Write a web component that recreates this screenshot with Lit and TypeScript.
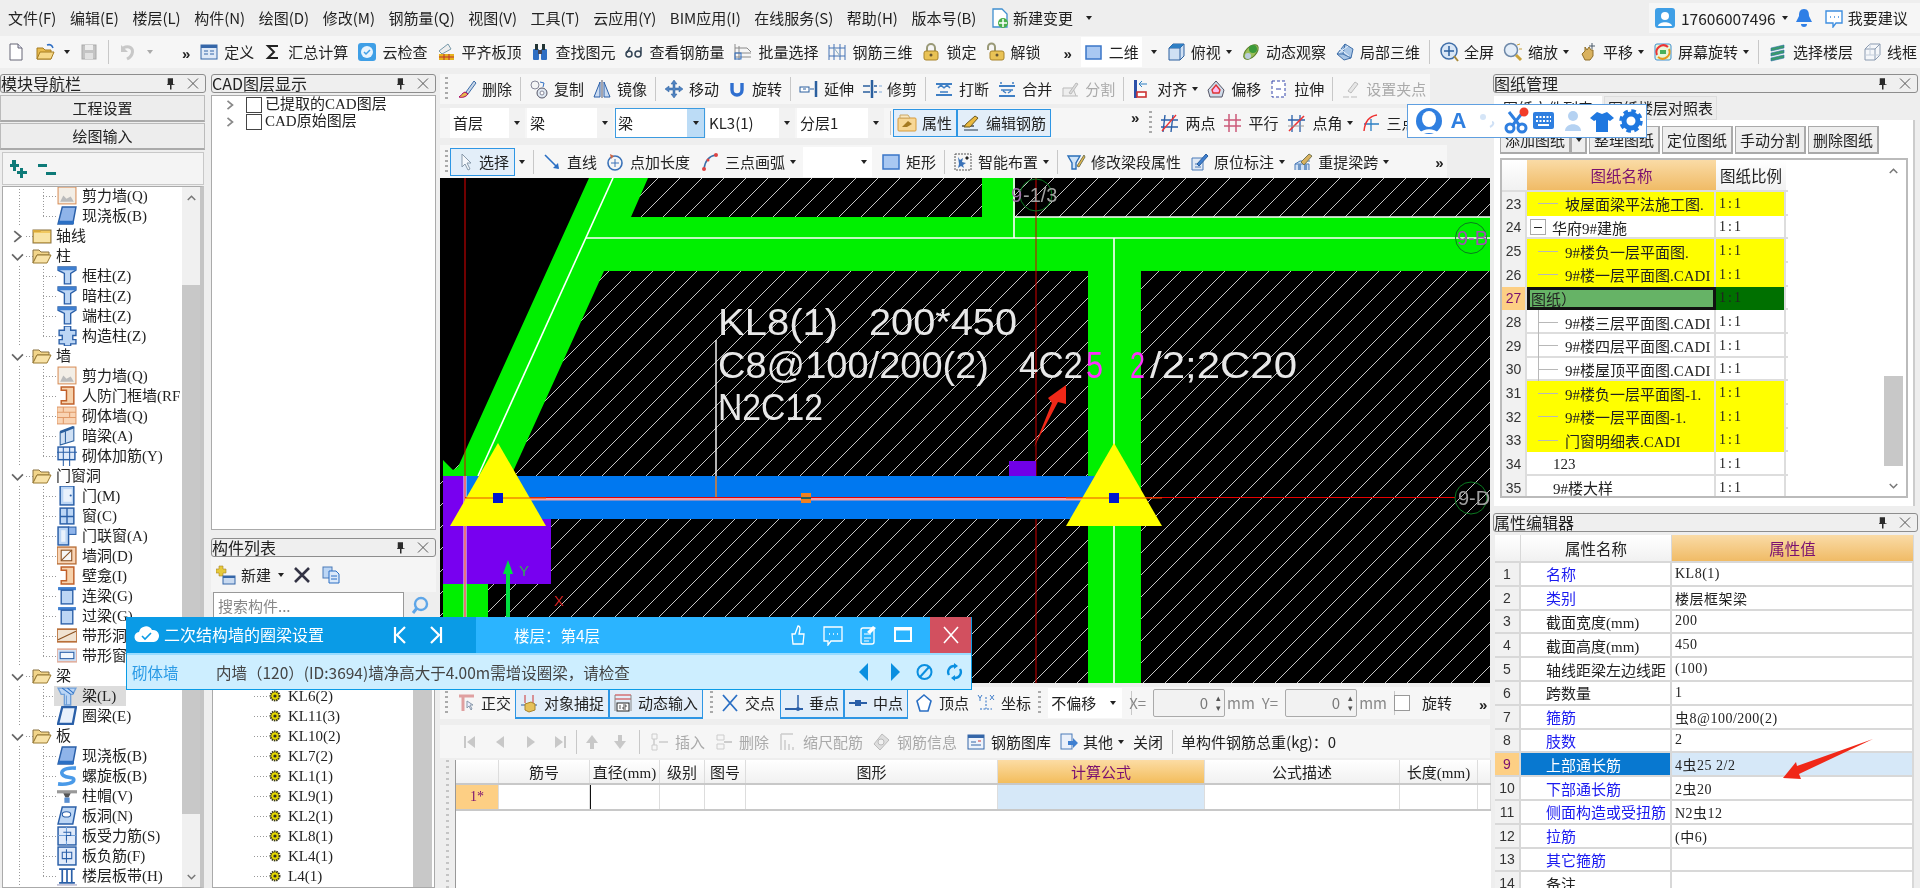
import { LitElement, html, css, svg } from "lit";
import { customElement } from "lit/decorators.js";

const B = "#2f6fc4";
const ICONS: Record<string, any> = {
  new: svg`<path d="M4 2h8l4 4v12H4z" fill="#fff" stroke="#667"/><path d="M12 2v4h4" fill="#dde" stroke="#667"/>`,
  open: svg`<path d="M2 17V6h6l2 2h6v9z" fill="#e8bb4e" stroke="#a67c20"/><path d="M2 17l3-7h14l-3 7z" fill="#f6d98a" stroke="#a67c20"/><path d="M12 3c3-1 5 0 6 3" fill="none" stroke="${B}" stroke-width="1.5"/>`,
  save: svg`<rect x="3" y="3" width="14" height="14" fill="#c4c4c4" stroke="#aaa"/><rect x="6" y="3" width="8" height="5" fill="#eee"/><rect x="6" y="11" width="8" height="6" fill="#e2e2e2"/>`,
  undo: svg`<path d="M5 6c6-3 11 0 9 6-1 3-3 4-5 5" fill="none" stroke="#c8c8c8" stroke-width="3"/><path d="M3 3v7h7z" fill="#c8c8c8"/>`,
  def: svg`<rect x="2" y="3" width="16" height="14" fill="#dfe9f7" stroke="#3566a8"/><rect x="2" y="3" width="16" height="3" fill="#3566a8"/><path d="M5 9h4M5 12h4M11 9h4M11 12h4" stroke="#3566a8"/>`,
  sigma: svg`<path d="M15 4H5l6 6-6 6h10" fill="none" stroke="#222" stroke-width="2"/>`,
  cloud: svg`<rect x="1" y="1" width="18" height="18" rx="3" fill="#3f9fe6"/><circle cx="10" cy="10" r="6" fill="#e8f4fd"/><path d="M7 10l2 2 4-4" fill="none" stroke="#3f9fe6" stroke-width="1.5"/>`,
  align: svg`<path d="M3 9l9-7 3 5-9 5z" fill="#eee" stroke="#79a"/><rect x="3" y="12" width="15" height="6" fill="#e6b21c"/><path d="M3 15h15M8 12v6M13 12v6" stroke="#b33"/>`,
  binoc: svg`<rect x="3" y="7" width="6" height="11" rx="1" fill="${B}"/><rect x="11" y="7" width="6" height="11" rx="1" fill="${B}"/><rect x="5" y="2" width="3" height="6" fill="#233"/><rect x="12" y="2" width="3" height="6" fill="#233"/><rect x="8" y="8" width="4" height="4" fill="#445"/>`,
  glasses: svg`<circle cx="5" cy="12" r="3" fill="none" stroke="#345" stroke-width="1.5"/><path d="M3 11l3-6" stroke="#345" stroke-width="1.5"/><path d="M14 9a3 3 0 100 6 3 3 0 000-6zM17 12V5" fill="none" stroke="#345" stroke-width="1.5"/>`,
  batch: svg`<path d="M2 2v16M6 4v14M2 6h12l4 4M2 11h16M2 15h16" stroke="#8a8a8a" fill="none"/><rect x="2" y="11" width="6" height="6" fill="none" stroke="${B}"/>`,
  r3d: svg`<path d="M2 3v15M7 2v16M13 2v16M18 3v15M2 6h16M2 14h16" stroke="#4472b4" fill="none"/><path d="M7 6l6 8" stroke="#8ab"/>`,
  lock: svg`<path d="M6 9V6a4 4 0 018 0v3" fill="none" stroke="#997" stroke-width="2"/><rect x="3" y="9" width="14" height="9" rx="2" fill="#e9c255" stroke="#a8832a"/><circle cx="10" cy="13" r="1.5" fill="#653"/>`,
  unlock: svg`<path d="M3 8V5a3.5 3.5 0 017 0v4" fill="none" stroke="#997" stroke-width="2"/><rect x="5" y="9" width="14" height="9" rx="2" fill="#e9c255" stroke="#a8832a"/><circle cx="12" cy="13" r="1.5" fill="#653"/>`,
  d2: svg`<rect x="2" y="4" width="15" height="13" fill="#a9c8f2" stroke="#3a76c8" stroke-width="1.5"/>`,
  top: svg`<path d="M3 6l4-4h11v12l-4 4H3z" fill="#cfe0f4" stroke="#2a5f9e"/><path d="M3 6h11v12M14 6l4-4" fill="none" stroke="#2a5f9e"/><path d="M3 6l4-4h11l-4 4z" fill="#2f7fc4"/>`,
  orbit: svg`<ellipse cx="10" cy="10" rx="9" ry="5" transform="rotate(-45 10 10)" fill="#9bbf5a" stroke="#5a7f2a"/><circle cx="12" cy="7" r="4" fill="#3a9a3a"/><circle cx="7" cy="14" r="3" fill="#bcd"/>`,
  local: svg`<path d="M10 2l8 5-2 9-7 2-7-6z" fill="#a7c5e6" stroke="#3f6ea8"/><path d="M10 2l-2 10 8 4M8 12l-6 0" stroke="#3f6ea8" fill="none"/><path d="M5 7l9 7M13 4l-9 7" stroke="#e9f2fb"/>`,
  full: svg`<circle cx="10" cy="9" r="8" fill="#d8e6f6" stroke="#3f6ea8" stroke-width="1.5"/><path d="M10 4v10M5 9h10" stroke="#2a5f9e" stroke-width="1.5"/><path d="M15 14l4 5" stroke="#a98a3a" stroke-width="2"/>`,
  zoom: svg`<circle cx="8" cy="8" r="6.5" fill="#e4eef9" stroke="#6d88a8" stroke-width="1.5"/><path d="M13 13l5 5" stroke="#c9a23a" stroke-width="3"/><path d="M14 3l3-1M16 7h3" stroke="#c9a23a"/>`,
  pan: svg`<path d="M4 12l3-3V5l2 3 2-3 2 3 2 0v6l-3 4H7z" fill="#d9b25f" stroke="#8f6f2a"/><path d="M14 1v6M11 4h6" stroke="#4a5a6a"/>`,
  srot: svg`<rect x="2" y="2" width="16" height="16" rx="2" fill="#eaf6d8" stroke="#3f8fd0"/><path d="M4 13a7 7 0 0111-8" fill="none" stroke="#e33" stroke-width="2"/><path d="M16 7a7 7 0 01-11 8" fill="none" stroke="#e89a1a" stroke-width="2"/><rect x="7" y="8" width="6" height="4" fill="#4ab05a"/>`,
  floor: svg`<path d="M3 6l13-3v3L3 9zM3 11l13-3v3L3 14zM3 16l13-3v3l-13 3z" fill="#3a9a6a" stroke="#2a6fa8" stroke-width=".6"/>`,
  wire: svg`<path d="M3 7l5-5h10v11l-5 5H3zM3 7h10v11M13 7l5-5" fill="#f5f7fa" stroke="#8a9ab0"/><path d="M8 2v11H3M8 13l10 0" stroke="#c4cedb" fill="none"/>`,
  brush: svg`<path d="M9 13l8-11 2 2-8 11z" fill="#c7d6e8" stroke="#3f6ea8"/><path d="M2 18c2-1 3-4 6-5l3 2c-2 3-6 4-9 3z" fill="#e4b74a" stroke="#a06"/>`,
  copy: svg`<circle cx="6" cy="6" r="4" fill="#f5f5f5" stroke="#889"/><circle cx="13" cy="14" r="5" fill="#dfe8f2" stroke="#556"/><circle cx="13" cy="14" r="2" fill="#fff" stroke="#889"/><path d="M11 3l4 1-1 4" fill="none" stroke="${B}"/>`,
  mirror: svg`<path d="M8 3v15H2zM12 3v15h6z" fill="#cbdcf2" stroke="#2a5fa8"/><path d="M10 1v18" stroke="#556"/>`,
  move: svg`<path d="M10 1l3 4h-2v4h4V7l4 3-4 3v-2h-4v4h2l-3 4-3-4h2v-4H5v2l-4-3 4-3v2h4V5H7z" fill="#4f82c0" stroke="#2a5f9e" stroke-width=".5"/>`,
  rot: svg`<path d="M5 4v7a5 5 0 0010 0V4" fill="none" stroke="#2f6fd0" stroke-width="3.4"/>`,
  extend: svg`<rect x="1" y="8" width="9" height="5" fill="#fff" stroke="#2a5f9e"/><path d="M11 10h4M4 10h3" stroke="#2a5f9e"/><path d="M17 2v16" stroke="#2a5f9e" stroke-width="2.5"/>`,
  trim: svg`<path d="M1 7h7M1 13h7M12 7h3M12 13h3" stroke="#2a5f9e" stroke-width="1.6"/><path d="M10 1v18" stroke="#2a5f9e" stroke-width="2.5"/><path d="M17 7h3M17 13h3" stroke="#a8c4e4" stroke-width="1.6"/>`,
  brk: svg`<path d="M2 5h16M2 16h16" stroke="#3f7fc4" stroke-width="2"/><path d="M4 9l3-3 3 3M16 9l-3-3-3 3M6 13h8" stroke="#3f7fc4" fill="none" stroke-width="1.5"/>`,
  merge: svg`<path d="M2 7h16M2 17h16" stroke="#3f7fc4" stroke-width="2"/><path d="M4 3v2M16 3v2M6 12l3 2M14 12l-3 2M4 11h12" stroke="#3f7fc4" fill="none" stroke-width="1.5"/>`,
  split: svg`<path d="M2 17h16M3 17V9h10l3 8" fill="#eee" stroke="#bbb"/><path d="M9 14l7-10 2 1-7 10z" fill="#ddd" stroke="#bbb"/>`,
  alignr: svg`<rect x="2" y="1" width="3" height="18" fill="#2a4fa8"/><rect x="5" y="13" width="9" height="5" fill="#fff" stroke="#c33" stroke-width="1.6"/><path d="M7 5h8M10 2L7 5l3 3" stroke="#2a7fc4" fill="none"/>`,
  offset: svg`<path d="M10 2l8 9-2 7H4l-2-7z" fill="#d0dcea" stroke="#556"/><path d="M10 6l4 5-1 3H7l-1-3z" fill="#fbe" stroke="#d33" stroke-width="1.4"/>`,
  stretch: svg`<rect x="3" y="2" width="13" height="16" fill="#fff" stroke="#34a" stroke-dasharray="3 2"/><path d="M7 10h5" stroke="#34a"/>`,
  grip: svg`<path d="M2 18h6M10 18h6M7 12l7-9 3 2-7 9z" stroke="#bbb" fill="#e6e6e6"/>`,
  prop: svg`<rect x="1" y="5" width="18" height="13" rx="1" fill="#f7d796" stroke="#d79a3a"/><path d="M3 2h8l2 3H3z" fill="#fbe7bd" stroke="#c9a868"/><path d="M5 14l6-6 4 3-5 3z" fill="#a57a22"/>`,
  edit: svg`<path d="M1 13h12" stroke="#222" stroke-width="1.2"/><path d="M3 14l2-3 9-8 3 2-8 9z" fill="#eab93f" stroke="#6b5a23"/><path d="M3 17h14" stroke="#456" stroke-width="1.2"/>`,
  twop: svg`<path d="M5 2l-2 17M13 2l-2 17M1 7h17M1 14h17" stroke="#2a5fa8" stroke-width="1.4"/><path d="M2 18L16 2" stroke="#e33" stroke-width="1.4"/>`,
  par: svg`<path d="M6 1v18M13 1v18M1 7h17M1 13h17" stroke="#cc5a7a" stroke-width="1.5"/>`,
  ang: svg`<path d="M5 2v17M13 2v17M1 7h17" stroke="#2a5fa8" stroke-width="1.3"/><path d="M2 18L17 3" stroke="#e33" stroke-width="1.6"/><path d="M1 13h16" stroke="#999"/>`,
  three: svg`<path d="M10 18V6M3 11h15" stroke="#2a7fc4" stroke-width="1.3"/><path d="M3 18C4 8 9 3 16 2" stroke="#e33" fill="none" stroke-width="1.5"/>`,
  cursor: svg`<path d="M6 2v13l3-3 3 6 2-1-3-6h4z" fill="#f5f8fc" stroke="#89a"/>`,
  line: svg`<path d="M3 3l13 13" stroke="#2a6fc4" stroke-width="1.6"/><path d="M17 17l-6-1 5-5z" fill="#2a6fc4"/>`,
  plen: svg`<circle cx="10" cy="11" r="7" fill="none" stroke="#3a72b8" stroke-width="1.6"/><path d="M10 7v8M6 11h8" stroke="#3a72b8"/><path d="M5 2l4 2-3 3z" fill="#c64"/>`,
  arc: svg`<path d="M4 17C5 9 9 4 16 3" fill="none" stroke="#3a6fa8" stroke-width="1.6"/><circle cx="4" cy="17" r="2" fill="#d44"/><circle cx="8" cy="8" r="1.5" fill="#d44"/><circle cx="16" cy="3" r="2" fill="#d44"/>`,
  rect: svg`<rect x="2" y="3" width="16" height="14" fill="#a9c8f2" stroke="#3a76c8" stroke-width="1.5"/>`,
  smart: svg`<rect x="2" y="2" width="16" height="16" fill="none" stroke="#555" stroke-dasharray="2 1"/><path d="M5 5l2 3 3-2-1 4 4 1-3 2 1 3-3-2-3 2 1-4z" fill="#3a72b8"/><path d="M14 4l2 2-2 2-2-2z" fill="#222"/>`,
  modb: svg`<path d="M2 4h12l-4 7v6H6v-6z" fill="#cfe4f8" stroke="#2a6fb8" stroke-width="1.4"/><path d="M11 14l7-11 1 2-6 10z" fill="#e6b84a" stroke="#775"/>`,
  orig: svg`<path d="M3 6h11v12H3z" fill="#dfe8f4" stroke="#4a7ab8"/><path d="M6 12h6M6 15h6" stroke="#4a7ab8"/><path d="M8 12l9-10 2 2-9 10z" fill="#3f7fd0" stroke="#2a5f9e"/>`,
  reex: svg`<path d="M2 18v-6h14v6M2 12l5-3h10" fill="#cfe0f4" stroke="#4a7ab8"/><path d="M5 12h3v6H5zM11 12h3v6h-3z" fill="#6f98c8"/><path d="M8 10l8-8 3 2-8 9z" fill="#d9b25f" stroke="#775"/>`,
  ortho: svg`<path d="M3 3h15" stroke="#e0a0a0" stroke-width="3"/><path d="M7 3v15" stroke="#e0a0a0" stroke-width="3"/><path d="M11 8v7l2-2 2 4 1-1-2-4h3z" fill="#eef" stroke="#89a"/>`,
  snap: svg`<path d="M2 12h16" stroke="#2a5fa8"/><path d="M6 2v8M14 2v8" stroke="#c33"/><path d="M6 11l6-2 4 2v6l-6 2-4-2z" fill="#e6c15a" stroke="#a8832a"/>`,
  dyn: svg`<path d="M2 2h16M2 6h16" stroke="#c33"/><path d="M2 2v16M18 2v16" stroke="#888"/><rect x="4" y="10" width="12" height="8" fill="#fff" stroke="#222"/><path d="M7 12v4M10 12h3v2h-3v2h3" stroke="#222" fill="none" stroke-width=".8"/>`,
  cross: svg`<path d="M3 2l14 16M17 2L3 18" stroke="#2a6fc4" stroke-width="1.8"/>`,
  perp: svg`<path d="M1 16h18" stroke="#2a5fa8" stroke-width="2"/><path d="M14 2v14" stroke="#2a5fa8" stroke-width="1.5"/><circle cx="14" cy="16" r="2" fill="#2a5fa8"/>`,
  mid: svg`<path d="M1 10h18" stroke="#2a5fa8" stroke-width="2"/><rect x="7" y="7" width="6" height="6" fill="#2a5fa8"/>`,
  vertex: svg`<path d="M10 2l7 6-3 10H6L3 8z" fill="#fff" stroke="#2a6fc4" stroke-width="1.6"/>`,
  coord: svg`<path d="M10 4v12M4 16h12" stroke="#2a6fc4" stroke-dasharray="2 1.5"/><path d="M2 2l2 3 2-3M4 5v3M14 2l4 5M18 2l-4 5" stroke="#2a6fc4" fill="none" stroke-width=".9"/>`,
  first: svg`<path d="M5 4h2v12H5zM16 4v12L8 10z" fill="#c8c8c8"/>`,
  prev: svg`<path d="M14 4v12L6 10z" fill="#c8c8c8"/>`,
  next: svg`<path d="M6 4v12l8-6z" fill="#c8c8c8"/>`,
  last: svg`<path d="M13 4h2v12h-2zM4 4v12l8-6z" fill="#c8c8c8"/>`,
  up: svg`<path d="M10 3l6 8h-4v6H8v-6H4z" fill="#c8c8c8"/>`,
  down: svg`<path d="M10 17l6-8h-4V3H8v6H4z" fill="#c8c8c8"/>`,
  ins: svg`<path d="M2 2h5v5H2zM2 13h5v5H2z" fill="none" stroke="#ccc"/><path d="M4 7v6M9 10h9" stroke="#ccc" stroke-width="1.5"/>`,
  del2: svg`<path d="M3 3h7v5H3zM3 12h7v5H3z" fill="none" stroke="#ccc"/><path d="M10 10h8" stroke="#ccc" stroke-width="2"/>`,
  scale: svg`<path d="M3 2v16M7 8v10M11 12v6M15 15v3M3 2h12" stroke="#ccc" stroke-width="1.5" fill="none"/>`,
  info: svg`<path d="M10 2l7 6-9 10-6-6z" fill="#ddd" stroke="#bbb"/><circle cx="9" cy="10" r="3" fill="#f1f1f1" stroke="#bbb"/>`,
  lib: svg`<rect x="2" y="3" width="16" height="14" fill="#eef3fb" stroke="#3566a8"/><rect x="2" y="3" width="16" height="3" fill="#3566a8"/><path d="M5 10h5M5 13h10" stroke="#3566a8"/><path d="M12 9h3" stroke="#c33"/>`,
  other: svg`<rect x="3" y="2" width="11" height="15" fill="#eaf0fa" stroke="#4a7ab8"/><path d="M10 9h5V6l5 5-5 5v-3h-5z" fill="#3f7fd0"/>`,
  plus: svg`<path d="M3 1h4v3h3v4H7v3H3V8H0V4h3z" fill="#e6c93a" stroke="#a8832a" stroke-width=".6"/><rect x="7" y="11" width="12" height="8" fill="#c9daf0" stroke="#3566a8"/><rect x="7" y="11" width="12" height="2" fill="#3566a8"/>`,
  x: svg`<path d="M3 3l14 14M17 3L3 17" stroke="#334" stroke-width="2.6"/>`,
  cp2: svg`<rect x="2" y="2" width="9" height="11" fill="#bcd6f5" stroke="#4a7ab8"/><path d="M8 6h7l3 3v9H8z" fill="#dbe9fa" stroke="#2a6fc4"/><path d="M10 11h6M10 14h6" stroke="#2a6fc4"/>`,
  search: svg`<circle cx="11" cy="8" r="6" fill="none" stroke="#5ea6e8" stroke-width="2.4"/><path d="M7 12l-4 5" stroke="#5ea6e8" stroke-width="3"/>`,
  pin: svg`<path d="M6 3h7v8h2v1h-4v6H9v-6H5v-1h1z" fill="#2b2b2b"/>`,
  close: svg`<path d="M3 3l12 12M15 3L3 15" stroke="#555" stroke-width="1.2" fill="none"/>`,
  user: svg`<rect x="0" y="0" width="20" height="20" rx="3" fill="#3f9fe6"/><circle cx="10" cy="8" r="4" fill="#fff"/><path d="M3 18c1-5 13-5 14 0z" fill="#fff"/>`,
  bell: svg`<path d="M10 1c4 0 5 3 5 7l3 6H2l3-6c0-4 1-7 5-7z" fill="#2f7fe6"/><path d="M7 16a3 3 0 006 0z" fill="#2f7fe6"/>`,
  msg: svg`<path d="M2 3h16v12H12l-3 4v-4H2z" fill="#fff" stroke="#3f8fe0" stroke-width="1.4"/><path d="M6 9h1M10 9h1M14 9h1" stroke="#3f8fe0" stroke-width="1.6"/>`,
  newch: svg`<path d="M3 1h9l5 5v13H3z" fill="#fff" stroke="#3f8fd0" stroke-width="1.3"/><circle cx="13" cy="15" r="5" fill="#4ab04a"/><path d="M13 11v8M9 15h8" stroke="#fff" stroke-width="1.5"/>`,
};

const TREE: Record<string, any> = {
  wall: svg`<rect x="1" y="1" width="17" height="16" fill="#f3eee6" stroke="#d9905a"/><path d="M3 15l3-6 3 3 4-2 3 5" fill="#bbb"/>`,
  slab: svg`<path d="M5 1h13l-3 16H1z" fill="#8fb4ea" stroke="#2a5fa8" stroke-width="1.4"/><path d="M2 14h14v3H1z" fill="#2a6fc4"/>`,
  col: svg`<path d="M1 1h17v3l-5 3v10H7V7L1 4z" fill="#bcd6f5" stroke="#2a5fa8" stroke-width="1.3"/><path d="M1 1h17v3H1z" fill="#3f7fd0"/>`,
  gz: svg`<path d="M7 0h6v4h5v5h-3v4h3v4h-5v2H7v-2H2v-4h3V9H2V4h5z" fill="#bcd6f5" stroke="#2a5fa8" stroke-width="1.3"/>`,
  jamb: svg`<path d="M4 1h12v16H4v-3h5V4H4z" fill="#f6d2ac" stroke="#c0602a" stroke-width="1.4"/>`,
  brick: svg`<rect x="0" y="1" width="18" height="16" fill="#f9d4b4" stroke="#e09a6a"/><path d="M0 6h18M0 11h18M6 1v5M12 6v5M6 11v6" stroke="#e09a6a"/>`,
  dbeam: svg`<path d="M3 6l13-5v13L3 18z" fill="#cfe0f4" stroke="#2a5f9e"/><path d="M3 6l13-5" stroke="#2a5f9e" stroke-width="2.6"/><path d="M8 5v11" stroke="#2a5f9e"/>`,
  mrebar: svg`<rect x="1" y="1" width="16" height="12" fill="#dfeafa" stroke="#2a5fa8" stroke-width="1.4"/><path d="M0 6h19M6 1v18M12 1v18" stroke="#2a5fa8"/>`,
  door: svg`<rect x="3" y="0" width="13" height="18" fill="#bcd6f5" stroke="#2a5fa8" stroke-width="1.4"/><rect x="6" y="3" width="8" height="12" fill="#eaf2fc"/><circle cx="13" cy="9" r="1" fill="#2a5fa8"/>`,
  win: svg`<rect x="3" y="2" width="13" height="15" fill="#bcd6f5" stroke="#2a5fa8" stroke-width="1.4"/><path d="M9.5 2v15M3 10h13" stroke="#2a5fa8" stroke-width="1.3"/>`,
  dw: svg`<rect x="1" y="1" width="10" height="17" fill="#bcd6f5" stroke="#2a5fa8" stroke-width="1.4"/><rect x="11" y="1" width="7" height="7" fill="#8fb4ea" stroke="#2a5fa8"/><rect x="4" y="4" width="4" height="11" fill="#eaf2fc"/>`,
  hole: svg`<rect x="0" y="1" width="18" height="16" fill="#f9d4b4" stroke="#b9703a" stroke-width="1.3"/><rect x="4" y="4" width="10" height="10" fill="#f6f6f6" stroke="#8a5020"/><path d="M4 14L14 4" stroke="#8a5020"/>`,
  lintel: svg`<path d="M1 1h17v3H1z" fill="#3f7fd0"/><rect x="4" y="4" width="11" height="13" fill="#bcd6f5" stroke="#2a5fa8" stroke-width="1.3"/>`,
  band: svg`<rect x="0" y="3" width="19" height="12" fill="#f0e3d2" stroke="#b9703a" stroke-width="1.6"/><path d="M1 13L18 5" stroke="#8a5020"/>`,
  bandw: svg`<rect x="0" y="3" width="19" height="12" fill="#cfe0f4" stroke="#e0b0a0" stroke-width="1.6"/><rect x="3" y="6" width="13" height="6" fill="#f2f7fd" stroke="#2a5fa8"/>`,
  beam: svg`<path d="M1 2h17l-3 6h-2v10H7V8H4z" fill="#bcd6f5" stroke="#6f9fd8" stroke-width="1.3"/><path d="M5 2l8 6M10 2l6 5" stroke="#2a6fc4"/><path d="M9 9v9" stroke="#6f9fd8"/>`,
  ring: svg`<path d="M5 1h13l-3 16H1z" fill="#e8f0fb" stroke="#2a5fa8" stroke-width="2.2"/>`,
  spiral: svg`<path d="M18 2C6 1 2 6 6 9s10 1 10 4-7 5-15 4" fill="none" stroke="#4a9ae8" stroke-width="3.4"/>`,
  cap: svg`<path d="M0 4h19v3H0z" fill="#999"/><path d="M6 7h7l-2 4H8z" fill="#555"/><rect x="7" y="11" width="5" height="5" fill="#5a8fd0"/>`,
  shole: svg`<path d="M5 1h13l-3 16H1z" fill="#bcd6f5" stroke="#2a5fa8" stroke-width="1.4"/><ellipse cx="9" cy="8" rx="4" ry="2.5" fill="#fff" stroke="#2a5fa8"/>`,
  sf: svg`<rect x="1" y="1" width="17" height="17" fill="#dfeafa" stroke="#2a5fa8" stroke-width="1.4"/><path d="M1 9h17M9 1v17" stroke="#6f9fd8"/><path d="M6 6h7v3H9v5" fill="none" stroke="#2a5fa8"/>`,
  sn: svg`<rect x="1" y="1" width="17" height="17" fill="#dfeafa" stroke="#2a5fa8" stroke-width="1.4"/><path d="M5 6h9v6H5zM9 3v13" fill="none" stroke="#2a5fa8"/>`,
  fb: svg`<path d="M2 3h15M2 16h15M5 3v13M14 3v13M9.5 3v13" stroke="#2a5fa8" stroke-width="1.6"/><path d="M0 18h19" stroke="#99b"/>`,
};

const ic = (n: string) => html`<svg class="ic" viewBox="0 0 20 20">${ICONS[n]}</svg>`;
const caret = (cls = "") => html`<i class="caret ${cls}"></i>`;
const sep = (ml = 0, mr = 0) => html`<i class="sep" style=${ml || mr ? `margin:0 ${mr}px 0 ${ml}px` : ""}></i>`;
const grip = (ml = 0, mr = 0) => html`<i class="grip" style=${ml || mr ? `margin:0 ${mr}px 0 ${ml}px` : ""}></i>`;
const M = (ml: number, c: any) => html`<span class="m" style="margin-left:${ml}px">${c}</span>`;
const T = (i: string, l: string, o: any = {}) => html`<span
  class="tool ${o.dis ? "dis" : ""} ${o.on ? "on" : ""}"
  style=${o.ml !== undefined ? `margin-left:${o.ml}px` : ""}>${ic(i)}<span>${l}</span>${o.caret ? caret() : ""}</span>`;
const on = (i: string, l: string, ml = 0) => html`<span class="btn-on" style="margin-left:${ml}px">${ic(i)}<span>${l}</span></span>`;
const combo = (t: string, w: number, sel = false) => html`<span class="combo ${sel ? "sel" : ""}" style="width:${w}px"><span class="ct">${t}</span><span class="cb">${caret()}</span></span>`;
const head = (t: string) => html`<div class="phead"><span>${t}</span><span class="pbtns"><svg class="pb" viewBox="0 0 18 20">${ICONS.pin}</svg><svg class="pb" viewBox="0 0 18 18">${ICONS.close}</svg></span></div>`;
const chev = (d: string) => html`<svg class="chev" viewBox="0 0 12 12"><path d=${d}/></svg>`;
const UP = "M1 8l5-5 5 5", DOWN = "M1 4l5 5 5-5", RIGHT = "M3 1l6 5-6 5";
const scrollbar = (cls: string, gap: number, th: number) => html`<div class=${cls}>
  <div class="s-up">${chev(UP)}</div>
  <div class="s-fill"><div class="s-gap" style="height:${gap}px"></div><div class="s-th" style="height:${th}px"></div></div>
  <div class="s-up">${chev(DOWN)}</div></div>`;

const tree: any[] = [
  ["c", "wall", "剪力墙(Q)"], ["cl", "slab", "现浇板(B)"],
  ["g", "r", "轴线"], ["g", "d", "柱"],
  ["c", "col", "框柱(Z)"], ["c", "col", "暗柱(Z)"], ["c", "col", "端柱(Z)"], ["cl", "gz", "构造柱(Z)"],
  ["g", "d", "墙"],
  ["c", "wall", "剪力墙(Q)"], ["c", "jamb", "人防门框墙(RF"], ["c", "brick", "砌体墙(Q)"], ["c", "dbeam", "暗梁(A)"], ["cl", "mrebar", "砌体加筋(Y)"],
  ["g", "d", "门窗洞"],
  ["c", "door", "门(M)"], ["c", "win", "窗(C)"], ["c", "dw", "门联窗(A)"], ["c", "hole", "墙洞(D)"], ["c", "jamb", "壁龛(I)"], ["c", "lintel", "连梁(G)"], ["c", "lintel", "过梁(G)"], ["c", "band", "带形洞"], ["cl", "bandw", "带形窗"],
  ["g", "d", "梁"],
  ["s", "beam", "梁(L)"], ["cl", "ring", "圈梁(E)"],
  ["g", "d", "板"],
  ["c", "slab", "现浇板(B)"], ["c", "spiral", "螺旋板(B)"], ["c", "cap", "柱帽(V)"], ["c", "shole", "板洞(N)"], ["c", "sf", "板受力筋(S)"], ["c", "sn", "板负筋(F)"], ["cl", "fb", "楼层板带(H)"],
];

const drawings: any[] = [
  [23, "坡屋面梁平法施工图.", "y", "l"], [24, "华府9#建施", "", "box"], [25, "9#楼负一层平面图.", "y", "l"], [26, "9#楼一层平面图.CADI", "y", "l"],
  [27, "图纸）", "sel", ""], [28, "9#楼三层平面图.CADI", "", "l"], [29, "9#楼四层平面图.CADI", "", "l"], [30, "9#楼屋顶平面图.CADI", "", "l"],
  [31, "9#楼负一层平面图-1.", "y", "l"], [32, "9#楼一层平面图-1.", "y", "l"], [33, "门窗明细表.CADI", "y", "le"], [34, "123", "", "i"], [35, "9#楼大样", "", "i"],
];

const props: any[] = [
  [1, "名称", "KL8(1)", 1], [2, "类别", "楼层框架梁", 1], [3, "截面宽度(mm)", "200"], [4, "截面高度(mm)", "450"], [5, "轴线距梁左边线距", "(100)"], [6, "跨数量", "1"],
  [7, "箍筋", "虫8@100/200(2)", 1], [8, "肢数", "2", 1], [9, "上部通长筋", "4虫25 2/2", 2], [10, "下部通长筋", "2虫20", 1], [11, "侧面构造或受扭筋", "N2虫12", 1], [12, "拉筋", "(中6)", 1], [13, "其它箍筋", "", 1], [14, "备注", ""],
];

const parts = ["KL6(2)", "KL11(3)", "KL10(2)", "KL7(2)", "KL1(1)", "KL9(1)", "KL2(1)", "KL8(1)", "KL4(1)", "L4(1)"];
const rebarHead = ["", "筋号", "直径(mm)", "级别", "图号", "图形", "计算公式", "公式描述", "长度(mm)", ""];

@customElement("app-root")
export class AppRoot extends LitElement {
  static styles = css`
    :host { display: block; width: 1920px; height: 888px; overflow: hidden; }
    .root { position: relative; width: 1920px; height: 888px; overflow: hidden; background: #eeeeee; color: #222; filter: blur(0.5px);
      font: 15px/1.2 "Noto Sans CJK SC", "Liberation Sans", sans-serif; display: flex; flex-direction: column; }
    .ic { width: 20px; height: 20px; flex: none; display: block; }
    .m { display: inline-flex; flex: none; }
    .caret { display: inline-block; width: 0; height: 0; flex: none; border-top: 4px solid #222; border-left: 3.5px solid transparent; border-right: 3.5px solid transparent; }
    .caret.dim { border-top-color: #aaa; }
    .caret.tight { margin-left: -4px; }
    .sep { width: 1px; height: 24px; background: #c8c8c8; flex: none; }
    .grip { width: 3px; height: 24px; flex: none; background: repeating-linear-gradient(#aaa 0 2px, transparent 2px 5px); }
    .tool { display: inline-flex; align-items: center; gap: 5px; flex: none; white-space: nowrap; }
    .tool.dis { color: #aaa; }
    .menu { height: 36px; display: flex; align-items: center; flex: none; padding-left: 8px; gap: 13.5px; white-space: nowrap; }
    .menu .tool { gap: 3px; }
    .userbox { margin-left: auto; height: 30px; width: 271px; display: flex; align-items: center; background: #f6f6f6; padding-left: 6px; box-sizing: border-box; }
    .userbox .p { margin: 0 6px 0 6px; font-size: 15.5px; }
    .userbox .bell { margin: 0 10px 0 6px; }
    .userbox .ms { margin-right: 4px; }
    .tb1 { height: 32px; flex: none; background: #f6f6f6; display: flex; align-items: center; gap: 9px; padding-left: 6px; white-space: nowrap; }
    .more { font: bold 15px "Liberation Sans", sans-serif; align-self: flex-start; color: #222; flex: none; line-height: 1; padding-top: 2px; }
    .box2 { display: inline-flex; align-items: center; gap: 5px; background: #fff; padding: 0 3px; height: 30px; flex: none; margin-left: 0; }
    .body { flex: 1; min-height: 0; display: flex; margin-top: 6px; }
    .col-nav { width: 206px; margin-right: 5px; display: flex; flex-direction: column; flex: none; }
    .col-cad { width: 225px; margin-right: 4px; display: flex; flex-direction: column; flex: none; }
    .col-mid { width: 1050px; margin-right: 3px; display: flex; flex-direction: column; flex: none; }
    .col-right { width: 425px; display: flex; flex-direction: column; flex: none; }
    .phead { height: 19px; box-sizing: border-box; flex: none; border: 1px solid #8d8d8d; border-radius: 3px; background: #efefef; display: flex; justify-content: space-between; align-items: center; font-size: 16px; line-height: 17px; white-space: nowrap; }
    .pbtns { display: flex; gap: 5px; padding-right: 3px; }
    .pb { width: 18px; height: 15px; }
    .navbtn { height: 27px; box-sizing: border-box; flex: none; margin-top: 1px; display: flex; align-items: center; justify-content: center; background: #ededed; border: 1px solid #bbb; border-bottom: 2px solid #aaa; margin-right: 1px; font-size: 15px; }
    .navbtn.first { margin-top: 2px; }
    .navtools { height: 33px; margin: 2px 2px 0; flex: none; background: #f4f4f4; border: 1px solid #c8c8c8; box-sizing: border-box; display: flex; align-items: center; gap: 8px; padding-left: 6px; }
    .tree { flex: 1; min-height: 0; margin: 1px 2px 0; background: #fff; border: 1px solid #aaa; border-right: 4px solid #c4c4c4; display: flex; overflow: hidden; }
    .tree-rows { flex: 1; margin-top: -1px; font: 15px/20px "Liberation Serif", "Noto Sans CJK SC", serif; overflow: hidden; }
    .scroll { width: 18px; flex: none; background: #f0f0f0; display: flex; flex-direction: column; }
    .s-up { height: 22px; flex: none; display: flex; align-items: center; justify-content: center; }
    .s-fill { flex: 1; display: flex; flex-direction: column; }
    .s-gap { flex: none; }
    .s-th { background: #c8c8c8; flex: none; }
    .chev { width: 9px; height: 9px; fill: none; stroke: #777; stroke-width: 2; display: block; }
    .node { height: 20px; display: flex; align-items: center; white-space: nowrap; position: relative; }
    .node.g { background: repeating-linear-gradient(90deg, #999 0 1px, transparent 1px 3px) 23px 50%/7px 1px no-repeat; }
    .node.g .chev { margin: 0 0 0 8px; flex: none; width: 13px; height: 13px; stroke-width: 1.6; stroke: #666; }
    .folder { width: 20px; height: 18px; margin: 0 4px 0 8px; flex: none; }
    .node.c, .node.s, .node.cl { padding-left: 54px; background:
      repeating-linear-gradient(#999 0 1px, transparent 1px 3px) 16px 0/1px 100% no-repeat,
      repeating-linear-gradient(#999 0 1px, transparent 1px 3px) 40px 0/1px 100% no-repeat,
      repeating-linear-gradient(90deg, #999 0 1px, transparent 1px 3px) 40px 50%/13px 1px no-repeat; }
    .node.cl { background:
      repeating-linear-gradient(#999 0 1px, transparent 1px 3px) 16px 0/1px 100% no-repeat,
      repeating-linear-gradient(#999 0 1px, transparent 1px 3px) 40px 0/1px 50% no-repeat,
      repeating-linear-gradient(90deg, #999 0 1px, transparent 1px 3px) 40px 50%/13px 1px no-repeat; }
    .tic { width: 20px; height: 20px; flex: none; margin-right: 5px; display: block; }
    .node .lab { display: inline-block; padding: 0 3px 0 0; }
    .node.s::before { content: ""; position: absolute; left: 51px; top: 0; width: 72px; height: 20px; background: #dcdcdc; z-index: 0; }
    .node.s > * { position: relative; z-index: 1; }
    .cad-body { height: 435px; flex: none; margin-top: 2px; background: #fff; border: 1px solid #aaa; box-sizing: border-box; font: 15px/15px "Liberation Serif", "Noto Sans CJK SC", serif; }
    .cad-row { height: 17px; display: flex; align-items: center; padding-left: 13px; white-space: nowrap; }
    .cad-row .chev { width: 10px; height: 10px; margin-right: 11px; stroke: #888; }
    .ck { width: 14px; height: 14px; border: 1px solid #444; background: #fff; flex: none; margin-right: 3px; display: block; }
    .ck.lite { border-color: #999; margin: 0 5px 0 -8px; }
    .comp { margin-top: 8px; flex: 1; min-height: 0; display: flex; flex-direction: column; }
    .comp-tb { height: 35px; flex: none; background: #f5f5f5; display: flex; align-items: center; padding-left: 5px; gap: 0; }
    .comp-tb .caret { margin-left: 2px; }
    .search { height: 28px; flex: none; display: flex; margin: 0 1px 0 2px; }
    .search .in { width: 191px; box-sizing: border-box; border: 1px solid #999; background: #fff; color: #888; padding-left: 4px; line-height: 26px; }
    .search .go { flex: 1; background: #eee; display: flex; align-items: center; justify-content: center; }
    .parts { flex: 1; min-height: 0; background: #fff; border: 1px solid #aaa; margin: 0 1px; display: flex; }
    .parts-rows { flex: 1; padding-top: 65px; padding-left: 41px; font: 15px/20px "Liberation Serif", "Noto Sans CJK SC", serif; overflow: hidden; }
    .part { height: 20px; display: flex; align-items: center; gap: 7px; padding-left: 15px; background: repeating-linear-gradient(90deg, #999 0 1px, transparent 1px 3px) 0 50%/14px 1px no-repeat; }
    .part svg { width: 12px; height: 12px; flex: none; }
    .p-scroll { width: 19px; flex: none; margin-right: 2px; background: #c8c8c8; }
    .tb { flex: none; display: flex; align-items: center; white-space: nowrap; background: #f6f6f6; }
    .rowA { height: 30px; gap: 8px; padding-left: 5px; width: 990px; box-sizing: border-box; }
    .rowB { height: 30px; margin-top: 4px; padding-left: 10px; }
    .rowC { height: 33px; margin-top: 7px; padding-left: 5px; gap: 8px; width: 1007px; box-sizing: border-box; }
    .rowD { height: 32px; margin-top: 4px; padding-left: 5px; gap: 7px; }
    .rowE { height: 33px; margin-top: 6px; padding-left: 19px; }
    .combo { display: inline-flex; height: 30px; flex: none; box-sizing: border-box; background: #fff; align-items: center; margin-right: 2px; }
    .combo .ct { flex: 1; padding-left: 3px; }
    .combo .cb { width: 16px; height: 100%; background: #f2f2f2; display: flex; align-items: center; justify-content: center; }
    .combo.sel { border: 1px solid #3c9be0; margin-right: 1px; }
    .combo.sel .ct { padding-left: 2px; }
    .combo.sel .cb { background: #bcdcf6; width: 17px; }
    .combo .end { width: 6px; flex: none; }
    .btn-on { display: inline-flex; height: 28px; box-sizing: border-box; gap: 5px; align-items: center; padding: 0 4px 0 3px; border: 1px solid #2e96e4; background: #e3eef9; flex: none; }
    .rowD .btn-on { height: 31px; border-width: 1px 1px 2px; }
    .rowC .tool.on { height: 28px; box-sizing: border-box; border: 1px solid #2e96e4; background: #e3eef9; padding: 0 5px 0 5px; gap: 3px; }
    .rowB .more { margin-left: 80px; }
    .rowC .blank { width: 69px; height: 30px; background: #fff; flex: none; display: flex; align-items: center; justify-content: flex-end; padding-right: 5px; box-sizing: border-box; margin-left: -1px; }
    .canvas { height: 505px; flex: none; margin-top: 0; background: #000; display: block; width: 1050px; }
    .spin { width: 72px; height: 28px; box-sizing: border-box; border: 1px solid #aaa; border-radius: 2px; background: #f2f2f2; display: flex; align-items: center; justify-content: flex-end; color: #777; padding-right: 16px; position: relative; flex: none; }
    .spin::after { content: "▴\\A▾"; white-space: pre; position: absolute; right: 3px; top: 3px; font-size: 9px; line-height: 10px; color: #555; }
    .muted { color: #888; flex: none; }
    .tbw { display: flex; flex: 1; min-height: 0; margin-top: 2px; }
    .strip { width: 15px; flex: none; background: repeating-linear-gradient(#c4c4c4 0 2px, transparent 2px 6px) 6px 0/3px 100% no-repeat; }
    .rtable { flex: 1; background: #fff; border-left: 1px solid #999; font: 15px "Liberation Serif", "Noto Sans CJK SC", serif; }
    .rrow { display: grid; grid-template-columns: 43px 91px 70px 45px 41px 252px 207px 195px 78px 13px; }
    .rh { height: 23px; border-bottom: 2px solid #c8c8c8; }
    .rh > div { border-right: 1px solid #ddd; display: flex; align-items: center; justify-content: center; white-space: nowrap; overflow: hidden; background: linear-gradient(#fff, #f1f1f1); }
    .rh > .act { background: linear-gradient(#fcdca4, #f3bd5c); color: #7a1070; }
    .rb { height: 24px; border-bottom: 2px solid #c8c8c8; }
    .rb > div { border-right: 1px solid #ddd; }
    .rb > .num { background: #fdcf84; color: #7a1070; display: flex; align-items: center; justify-content: center; font: 14px "Liberation Serif", serif; }
    .rb > .cur { border-left: 1px solid #111; }
    .rb > .calc { background: #d6e8f8; }
    .tabs { display: flex; margin-top: 3px; height: 24px; padding-left: 1px; flex: none; }
    .tab { width: 108px; background: #fff; display: flex; align-items: center; justify-content: center; font-size: 15px; height: 24px; white-space: nowrap; }
    .tab.off { width: 113px; margin-left: 2px; background: #ececec; border: 1px solid #ddd; box-sizing: border-box; }
    .dbox { margin: 0 3px 0 1px; height: 386px; box-sizing: border-box; flex: none; background: #fff; padding: 6px 0 0 6px; border-right: 2px solid #ccc; }
    .dbtns { display: flex; height: 28px; gap: 2px; }
    .dbtn { background: #eee; border: 1px solid #aaa; border-width: 1px 2px 2px 1px; box-sizing: border-box; display: flex; align-items: center; justify-content: center; width: 71px; font-size: 15px; white-space: nowrap; flex: none; }
    .dbtn.c { width: 16px; margin-left: -2px; }
    .dt { margin-top: 4px; height: 340px; border: 2px solid #bbb; display: flex; overflow: hidden; width: 408px; box-sizing: border-box; }
    .dtm { width: 286px; flex: none; font: 15px "Liberation Serif", "Noto Sans CJK SC", serif; overflow: hidden; }
    .dfill { flex: 1; }
    .dr { display: grid; grid-template-columns: 25px 189px 70px; height: 23.67px; box-sizing: border-box; border-bottom: 2px solid #ddd; }
    .dr > div { display: flex; align-items: center; border-right: 2px solid #ddd; box-sizing: border-box; white-space: nowrap; overflow: hidden; height: 23.67px; position: relative; }
    .dhead { height: 32px; display: grid; grid-template-columns: 25px 189px 70px; border-bottom: 2px solid #ddd; font-size: 15.5px; box-sizing: border-box; }
    .dhead > div { display: flex; align-items: center; justify-content: center; background: linear-gradient(#fff, #f1f1f1); }
    .dhead .act { background: linear-gradient(#fadba6, #f0bb66); color: #7a1070; }
    .n { justify-content: center; background: #f1f1f1; font-family: "Liberation Sans", sans-serif; font-size: 14px; color: #333; }
    .ratio { padding-left: 3px; letter-spacing: 2px; font-size: 14px; }
    .dr.y .nm, .dr.y .ratio { background: #ffff00; }
    .dr.sel .n { background: #fdcf84; color: #7a1070; }
    .dr.sel .nm { background: #66b366; outline: 3px solid #111; outline-offset: -3px; padding-left: 4px; }
    .dr.sel .ratio { background: #007000; }
    .nm.l, .nm.le { padding-left: 11px; background-image: linear-gradient(#b8b8b8, #b8b8b8); background-repeat: no-repeat; background-size: 1px 100%; background-position: 11px 0; }
    .nm.le { background-size: 1px 50%; }
    .conn { width: 20px; height: 1px; background: #b8b8b8; margin-right: 7px; flex: none; }
    .nm.box { padding-left: 3px; }
    .bx { width: 14px; height: 14px; border: 1px solid #aaa; background: #fff; margin-right: 6px; display: flex; align-items: center; justify-content: center; flex: none; }
    .bx::after { content: ""; width: 8px; height: 1px; background: #222; }
    .nm.i { padding-left: 26px; }
    .d-scroll { width: 19px; flex: none; margin-right: 3px; display: flex; flex-direction: column; background: #fff; }
    .pbox { margin-top: 7px; flex: 1; min-height: 0; display: flex; flex-direction: column; }
    .pt { margin: 3px 0 0 2px; width: 419px; background: #fff; font: 15px "Liberation Serif", "Noto Sans CJK SC", serif; overflow: hidden; flex: 1; }
    .pr { display: grid; grid-template-columns: 26px 151px 242px; height: 23.8px; box-sizing: border-box; border-bottom: 2px solid #d8d8d8; }
    .pr > div { display: flex; align-items: center; white-space: nowrap; overflow: hidden; border-right: 2px solid #d8d8d8; box-sizing: border-box; }
    .phd { display: grid; grid-template-columns: 26px 151px 242px; height: 28px; border-bottom: 2px solid #d8d8d8; font-size: 15.5px; box-sizing: border-box; }
    .phd > div { display: flex; align-items: center; justify-content: center; background: linear-gradient(#fff, #f1f1f1); border-right: 1px solid #d8d8d8; }
    .phd .act { background: linear-gradient(#fadba6, #f0bb66); color: #7a1070; }
    .pn { padding-left: 25px; }
    .pv { padding-left: 3px; font-size: 14px; letter-spacing: .5px; }
    .link { color: #1a1af0; }
    .pr.cur .n { background: #fdcf84; color: #7a1070; }
    .pr.cur .pn { background: #0878d0; color: #fff; }
    .pr.cur .pv { background: #d6e8f8; }
    .dialog { position: absolute; left: 126px; top: 617px; width: 846px; height: 73px; box-sizing: border-box; z-index: 5; border: 1px solid #0a9be6; border-top: 0; background: #cdeeff; display: flex; flex-direction: column; }
    .dt-bar { height: 36px; display: flex; background: #2bb4ff; color: #fff; flex: none; align-items: center; }
    .dt-l { width: 349px; height: 100%; background: #0a9be6; display: flex; align-items: center; flex: none; box-sizing: border-box; padding-left: 7px; font-size: 16px; }
    .dt-l .title { margin-left: 4px; width: 228px; white-space: nowrap; }
    .dt-l svg { width: 26px; height: 20px; flex: none; }
    .dt-l svg.dnav { width: 16px; height: 20px; margin-right: 20px; }
    .dt-m { padding-left: 38px; font-size: 15.5px; flex: 1; white-space: nowrap; }
    .dt-r { display: flex; align-items: center; height: 100%; gap: 15px; }
    .dt-r svg { width: 20px; height: 22px; flex: none; }
    .dclose { width: 41px; height: 100%; background: #d2505f; display: flex; align-items: center; justify-content: center; margin-left: 2px; }
    .d-body { flex: 1; display: flex; align-items: center; font-size: 15.5px; padding-left: 5px; white-space: nowrap; border-top: 2px solid #9adcff; }
    .d-cat { color: #2b9be6; width: 84px; flex: none; }
    .d-msg { flex: 1; color: #444; }
    .d-ctl { display: flex; gap: 13px; align-items: center; padding-right: 8px; }
    .d-ctl svg { width: 17px; height: 20px; flex: none; }
    .ime { position: absolute; left: 1407px; top: 104px; width: 240px; height: 34px; box-sizing: border-box; background: #fff; border: 1px solid #5f9fe0; z-index: 5; display: flex; align-items: center; padding-left: 6px; }
    .ime svg { flex: none; }
    .ime .a { font: 600 22px "Liberation Sans", sans-serif; color: #2f7fe0; width: 27px; text-align: center; margin: 0 0 0 1px; }
    .arrow { position: absolute; left: 1770px; top: 730px; width: 110px; height: 60px; z-index: 6; }
  `;

  render() {
    const folderOpen = svg`<path d="M1 16V3h6l2 2h8v3H5L1 16z" fill="#f2d58a" stroke="#8a7340"/><path d="M1 16l4-8h14l-4 8z" fill="#f8e2a6" stroke="#9a7a30"/>`;
    const folderClosed = svg`<rect x="1" y="3" width="18" height="13" fill="#f0c860" stroke="#8a7340"/><path d="M1 3h7l1 2H1z" fill="#d9a93a"/><rect x="2" y="6" width="16" height="9" fill="#f8e4a6"/>`;
    const dlen = (x: number, y: number, w: number, t: string, fill = "#e8e8e8") => svg`<text x=${x} y=${y} textLength=${w} lengthAdjust="spacingAndGlyphs" fill=${fill}>${t}</text>`;
    return html`<div class="root">
      <div class="menu">
        ${["文件(F)", "编辑(E)", "楼层(L)", "构件(N)", "绘图(D)", "修改(M)", "钢筋量(Q)", "视图(V)", "工具(T)", "云应用(Y)", "BIM应用(I)", "在线服务(S)", "帮助(H)", "版本号(B)"].map((m) => html`<span>${m}</span>`)}
        <span class="tool">${ic("newch")}<span>新建变更</span></span>${caret()}
        <div class="userbox">${ic("user")}<span class="p">17606007496</span>${caret()}<svg class="ic bell" viewBox="0 0 20 20">${ICONS.bell}</svg><svg class="ic ms" viewBox="0 0 20 20">${ICONS.msg}</svg><span>我要建议</span></div>
      </div>
      <div class="tb1">
        ${ic("new")}${ic("open")}${caret()}${ic("save")}${sep()}${ic("undo")}${caret("dim")}
        ${M(20, html`<span class="more">»</span>`)}
        ${T("def", "定义", { ml: 0 })}${T("sigma", "汇总计算")}${T("cloud", "云检查")}${T("align", "平齐板顶")}${T("binoc", "查找图元")}${T("glasses", "查看钢筋量")}${T("batch", "批量选择")}${T("r3d", "钢筋三维")}${T("lock", "锁定")}${T("unlock", "解锁")}
        ${M(14, html`<span class="more">»</span>`)}
        <span class="box2">${ic("d2")}<span>二维</span></span>${caret()}
        ${T("top", "俯视", { ml: 0, caret: true })}${T("orbit", "动态观察")}${T("local", "局部三维")}${sep()}${T("full", "全屏")}${T("zoom", "缩放", { caret: true })}${T("pan", "平移", { caret: true })}${T("srot", "屏幕旋转", { caret: true })}${sep()}${T("floor", "选择楼层")}${T("wire", "线框")}
      </div>
      <div class="body">
        <div class="col-nav">
          ${head("模块导航栏")}
          <div class="navbtn first">工程设置</div>
          <div class="navbtn">绘图输入</div>
          <div class="navtools">
            <svg class="ic" viewBox="0 0 20 20"><path d="M3 1h4v4h3v3H7v4H4V8H1V5h2zM11 9h3v3h4v3h-4v4h-3v-4H8v-3h3z" fill="#0e7a78"/></svg>
            <svg class="ic" viewBox="0 0 20 20"><path d="M1 5h9v3H1zM9 13h10v3H9z" fill="#0e7a78"/></svg>
          </div>
          <div class="tree">
            <div class="tree-rows">
              ${tree.map((r: any) => r[0] === "g"
                ? html`<div class="node g">${chev(r[1] === "d" ? DOWN : RIGHT)}<svg class="folder" viewBox="0 0 20 18">${r[1] === "d" ? folderOpen : folderClosed}</svg><span class="lab">${r[2]}</span></div>`
                : html`<div class="node ${r[0]}"><svg class="tic" viewBox="0 0 19 19">${TREE[r[1]]}</svg><span class="lab">${r[2]}</span></div>`)}
            </div>
            ${scrollbar("scroll", 76, 529)}
          </div>
        </div>
        <div class="col-cad">
          ${head("CAD图层显示")}
          <div class="cad-body">
            <div class="cad-row">${chev(RIGHT)}<i class="ck"></i><span>已提取的CAD图层</span></div>
            <div class="cad-row">${chev(RIGHT)}<i class="ck"></i><span>CAD原始图层</span></div>
          </div>
          <div class="comp">
            ${head("构件列表")}
            <div class="comp-tb">
              ${T("plus", "新建", { caret: true })}
              ${M(8, ic("x"))}${M(9, ic("cp2"))}
            </div>
            <div class="search"><div class="in">搜索构件...</div><div class="go">${ic("search")}</div></div>
            <div class="parts">
              <div class="parts-rows">
                ${parts.map((p) => html`<div class="part"><svg viewBox="0 0 12 12"><circle cx="6" cy="6" r="4.5" fill="#e6d800" stroke="#332" stroke-dasharray="1.4 .8" stroke-width="2"/><circle cx="6" cy="6" r="1.6" fill="#332"/></svg><span>${p}</span></div>`)}
              </div>
              <div class="p-scroll"></div>
            </div>
          </div>
        </div>
        <div class="col-mid">
          <div class="tb rowA">
            ${grip()}${T("brush", "删除", { ml: 1 })}${sep()}${T("copy", "复制")}${T("mirror", "镜像")}${sep()}${T("move", "移动")}${T("rot", "旋转")}${sep()}${T("extend", "延伸")}${T("trim", "修剪")}${sep()}${T("brk", "打断")}${T("merge", "合并")}${T("split", "分割", { dis: 1 })}${sep()}${T("alignr", "对齐", { caret: 1 })}${T("offset", "偏移")}${T("stretch", "拉伸")}${sep()}${T("grip", "设置夹点", { dis: 1 })}
          </div>
          <div class="tb rowB">
            ${combo("首层", 75)}${combo("梁", 86)}${combo("梁", 90, true)}${combo("KL3(1)", 89)}${combo("分层1", 87)}
            ${sep(4, 2)}
            ${on("prop", "属性")}${on("edit", "编辑钢筋")}
            <span class="more">»</span>
            ${grip(10, 8)}
            ${T("twop", "两点")}${T("par", "平行", { ml: 8 })}${T("ang", "点角", { ml: 9, caret: 1 })}${T("three", "三点", { ml: 8 })}
          </div>
          <div class="tb rowC">
            ${grip()}${T("cursor", "选择", { on: 1, ml: -6 })}${caret("tight")}${sep()}${T("line", "直线")}${T("plen", "点加长度")}${T("arc", "三点画弧", { caret: 1, ml: 2 })}<span class="blank">${caret()}</span>${T("rect", "矩形", { ml: 1 })}${sep()}${T("smart", "智能布置", { caret: 1 })}${sep()}${T("modb", "修改梁段属性")}${T("orig", "原位标注", { caret: 1 })}${T("reex", "重提梁跨", { caret: 1 })}
            ${M(38, html`<span class="more">»</span>`)}
          </div>
          <svg class="canvas" viewBox="440 178 1050 505">
            <defs>
              <pattern id="h" width="22" height="22" patternUnits="userSpaceOnUse"><path d="M-2 2L2 -2M0 22L22 0M20 24L24 20" stroke="#c4c4c4" stroke-width="1"/></pattern>
            </defs>
            <rect x="440" y="178" width="1050" height="505" fill="#000"/>
            <g fill="url(#h)">
              <polygon points="640,178 982,178 982,217 625,217"/>
              <polygon points="1015,178 1490,178 1490,217 1015,217"/>
              <polygon points="604,271 1088,271 1088,683 440,683 440,476"/>
              <rect x="1141" y="271" width="349" height="412"/>
            </g>
            <polygon fill="#00f000" points="589,178 648,178 631,217 982,217 982,178 1015,178 1015,217 1490,217 1490,271 1141,271 1141,683 1088,683 1088,271 604,271 511,476 443,476 443,460 453,470 458,467"/>
            <rect x="443" y="584" width="45" height="99" fill="#00f000"/>
            <g stroke="#fff" stroke-width="1.6" fill="none">
              <path d="M613,178L478,476"/><path d="M586,238H1490"/><path d="M1014,178V238"/><path d="M1015,217H1490"/><path d="M1114,238V683"/>
            </g>
            <path d="M1036,178V683" stroke="#d00000" stroke-width="1"/>
            <path d="M465,178V476" stroke="#e00000" stroke-width="1"/>
            <rect x="443" y="476" width="30" height="108" fill="#7800f0"/><rect x="443" y="519" width="108" height="65" fill="#7800f0"/>
            <rect x="1009" y="461" width="27" height="15" fill="#7000e8"/>
            <rect x="465" y="476" width="630" height="43" fill="#0078f0"/>
            <path d="M465,476V683" stroke="#f0e8f8" stroke-width="3"/><path d="M465,476V683" stroke="#e00000" stroke-width="1"/>
            <path d="M716,340V476" stroke="#fff" stroke-width="1.4"/><path d="M716,476V498" stroke="#f08020" stroke-width="1.4"/>
            <path d="M465,499H1100" stroke="#f4a0a8" stroke-width="3"/>
            <path d="M465,497.5H1455" stroke="#e80000" stroke-width="1.2"/>
            <g fill="#ffff00"><polygon points="498,443 546,526 450,526"/><polygon points="1114,443 1162,526 1066,526"/></g>
            <path d="M465,498H546M1066,498H1162" stroke="#e85000" stroke-width="1.2"/>
            <rect x="493" y="493" width="10" height="10" fill="#0018d0"/><rect x="1109" y="493" width="10" height="10" fill="#0018d0"/>
            <rect x="801" y="493" width="10" height="10" fill="#f08020"/><rect x="801" y="497" width="10" height="2" fill="#206060"/>
            <g font-family="Liberation Sans" font-size="37">
              ${dlen(718, 335, 120, "KL8(1)")}${dlen(869, 335, 148, "200*450")}
              ${dlen(718, 378, 271, "C8@100/200(2)")}${dlen(1019, 378, 64, "4C2")}${dlen(1086, 378, 17, "5", "#ff30ff")}${dlen(1130, 378, 15, "2", "#ff30ff")}${dlen(1150, 378, 147, "/2;2C20")}
              ${dlen(718, 420, 105, "N2C12")}
            </g>
            <polygon points="1034,447 1052,403 1048,398 1066,385 1066,404 1058,402" fill="#f02818"/>
            <g fill="none" stroke="#0b7a20" stroke-width="1">
              <circle cx="1036" cy="195" r="16"/><circle cx="1471" cy="238" r="15.5"/><circle cx="1471" cy="498" r="16"/>
            </g>
            <g font-family="Liberation Sans" font-size="20">
              <text x="1011" y="202" fill="#a070a8">9</text><text x="1023" y="202" fill="#a0a0a0">-1/3</text>
              <text x="1457" y="245" fill="#a050b0">9-B</text><text x="1458" y="505" fill="#a0a0a0">9-D</text>
              <text x="519" y="576" fill="#30b050" font-size="15">Y</text><text x="554" y="606" fill="#d02020" font-size="15">X</text>
            </g>
            <path d="M508,568V683" stroke="#00e040" stroke-width="4"/><polygon points="508,560 513,574 503,574" fill="#00e040"/>
          </svg>
          <div class="tb rowD">
            ${grip()}${T("ortho", "正交", { ml: 1 })}${on("snap", "对象捕捉", -3)}${on("dyn", "动态输入", -7)}
            ${grip()}${T("cross", "交点", { ml: 0 })}${on("perp", "垂点", -2)}${on("mid", "中点", -7)}${T("vertex", "顶点", { ml: -1 })}${T("coord", "坐标")}
            ${grip()}<span class="combo" style="width:74px"><span class="ct">不偏移</span>${caret()}<i class="end"></i></span>${sep()}
            ${M(-10, html`<span class="muted">X=</span>`)}<span class="spin">0</span>${M(-5, html`<span class="muted">mm</span>`)}<span class="muted">Y=</span><span class="spin">0</span>${M(-5, html`<span class="muted">mm</span>`)}${sep()}<i class="ck lite"></i><span>旋转</span>
            ${M(20, html`<span class="more">»</span>`)}
          </div>
          <div class="tb rowE">
            ${ic("first")}${M(11, ic("prev"))}${M(11, ic("next"))}${M(10, ic("last"))}
            ${sep(5, 5)}${ic("up")}${M(8, ic("down"))}${sep(9, 10)}
            ${T("ins", "插入", { dis: 1 })}${T("del2", "删除", { dis: 1, ml: 9 })}${T("scale", "缩尺配筋", { dis: 1, ml: 9 })}${T("info", "钢筋信息", { dis: 1, ml: 9 })}${T("lib", "钢筋图库", { ml: 9 })}${T("other", "其他", { ml: 7, caret: 1 })}${M(9, html`<span>关闭</span>`)}${sep(9, 8)}<span>单构件钢筋总重(kg)：0</span>
          </div>
          <div class="tbw">
            <div class="strip"></div>
            <div class="rtable">
              <div class="rrow rh">${rebarHead.map((h, i) => html`<div class=${i === 6 ? "act" : ""}>${h}</div>`)}</div>
              <div class="rrow rb"><div class="num">1*</div><div></div><div class="cur"></div><div></div><div></div><div></div><div class="calc"></div><div></div><div></div><div></div></div>
            </div>
          </div>
        </div>
        <div class="col-right">
          ${head("图纸管理")}
          <div class="tabs"><div class="tab">图纸文件列表</div><div class="tab off">图纸楼层对照表</div></div>
          <div class="dbox">
            <div class="dbtns"><div class="dbtn">添加图纸</div><div class="dbtn c">${caret()}</div><div class="dbtn">整理图纸</div><div class="dbtn">定位图纸</div><div class="dbtn">手动分割</div><div class="dbtn">删除图纸</div></div>
            <div class="dt">
              <div class="dtm">
                <div class="dhead"><div></div><div class="act">图纸名称</div><div>图纸比例</div></div>
                ${drawings.map((d) => html`<div class="dr ${d[2]}"><div class="n">${d[0]}</div><div class="nm ${d[3]}">${d[3] === "box" ? html`<i class="bx"></i>` : ""}${d[3] === "l" || d[3] === "le" ? html`<i class="conn"></i>` : ""}<span>${d[1]}</span></div><div class="ratio">1:1</div></div>`)}
              </div>
              <div class="dfill"></div>
              ${scrollbar("d-scroll", 194, 90)}
            </div>
          </div>
          <div class="pbox">
            ${head("属性编辑器")}
            <div class="pt">
              <div class="phd"><div></div><div>属性名称</div><div class="act">属性值</div></div>
              ${props.map((p) => html`<div class="pr ${p[3] === 2 ? "cur" : ""}"><div class="n">${p[0]}</div><div class="pn ${p[3] ? "link" : ""}">${p[1]}</div><div class="pv">${p[2]}</div></div>`)}
            </div>
          </div>
        </div>
      </div>

      <div class="dialog">
        <div class="dt-bar">
          <div class="dt-l">
            <svg viewBox="0 0 26 20"><path d="M6 17a5 5 0 01-1-10 7 7 0 0113-2 6 6 0 012 12z" fill="#fff"/><path d="M8 11l3 3 6-6" stroke="#0a9be6" stroke-width="1.6" fill="none"/></svg>
            <span class="title">二次结构墙的圈梁设置</span>
            <svg class="dnav" viewBox="0 0 16 20"><path d="M3 2v16M13 2L5 10l8 8" stroke="#fff" stroke-width="2.2" fill="none"/></svg>
            <svg class="dnav" viewBox="0 0 16 20"><path d="M13 2v16M3 2l8 8-8 8" stroke="#fff" stroke-width="2.2" fill="none"/></svg>
          </div>
          <div class="dt-m">楼层：第4层</div>
          <div class="dt-r">
            <svg viewBox="0 0 20 22"><path d="M4 10h3l3-8c2 0 2 2 2 3l-1 5h5l-1 10H5z" fill="none" stroke="#fff" stroke-width="1.3"/></svg>
            <svg viewBox="0 0 20 22"><path d="M1 3h18v14H8l-3 4v-4H1z" fill="none" stroke="#fff" stroke-width="1.3"/><path d="M6 10h1M10 10h1M14 10h1" stroke="#fff" stroke-width="1.5"/></svg>
            <svg viewBox="0 0 20 22"><rect x="3" y="4" width="13" height="16" rx="2" fill="none" stroke="#fff" stroke-width="1.3"/><path d="M6 10h7M6 14h7M6 17h5" stroke="#fff"/><path d="M9 8l6-6 3 2-6 6z" fill="#fff"/></svg>
            <svg viewBox="0 0 20 22"><rect x="2" y="4" width="16" height="13" fill="none" stroke="#fff" stroke-width="2"/><path d="M2 5h16" stroke="#fff" stroke-width="3"/></svg>
            <div class="dclose"><svg viewBox="0 0 20 22"><path d="M3 3l14 16M17 3L3 19" stroke="#fff" stroke-width="1.6"/></svg></div>
          </div>
        </div>
        <div class="d-body">
          <span class="d-cat">砌体墙</span>
          <span class="d-msg">内墙（120）(ID:3694)墙净高大于4.00m需增设圈梁，请检查</span>
          <span class="d-ctl">
            <svg viewBox="0 0 17 20"><path d="M12 1v18L3 10z" fill="#0a8fe0"/></svg>
            <svg viewBox="0 0 17 20"><path d="M5 1v18l9-9z" fill="#0a8fe0"/></svg>
            <svg viewBox="0 0 17 20"><circle cx="8.5" cy="10" r="7" fill="none" stroke="#0a8fe0" stroke-width="2"/><path d="M4 15L13 5" stroke="#0a8fe0" stroke-width="2"/></svg>
            <svg viewBox="0 0 17 20"><path d="M3 13a6 6 0 016-9M14 7a6 6 0 01-6 9" fill="none" stroke="#0a8fe0" stroke-width="2.4"/><path d="M8 1l4 3-4 3zM9 13l-4 3 4 3z" fill="#0a8fe0"/></svg>
          </span>
        </div>
      </div>

      <div class="ime">
        <svg width="30" height="30" viewBox="0 0 30 30"><circle cx="15" cy="15" r="13" fill="#2f7fe0"/><ellipse cx="15" cy="13" rx="7" ry="8" fill="#fff"/><path d="M6 27c3-5 15-5 18 0" fill="#fff"/></svg>
        <span class="a">A</span>
        <svg width="30" height="24" viewBox="0 0 30 24"><circle cx="11" cy="8" r="3" fill="#d5e5f7"/><path d="M20 13c2 0 2 3-2 5" stroke="#cfe0f5" stroke-width="2" fill="none"/></svg>
        <svg width="28" height="30" viewBox="0 0 28 30"><path d="M7 6l11 14M21 6L10 20" stroke="#2f7fe0" stroke-width="3"/><circle cx="8" cy="22" r="4" fill="none" stroke="#2f7fe0" stroke-width="3"/><circle cx="20" cy="22" r="4" fill="none" stroke="#2f7fe0" stroke-width="3"/><circle cx="22" cy="6" r="4.5" fill="#f23c2a"/></svg>
        <svg width="28" height="24" viewBox="0 0 28 24"><rect x="3" y="3" width="21" height="17" rx="2" fill="#2f7fe0"/><path d="M6 8h15M6 12h15" stroke="#fff" stroke-width="2" stroke-dasharray="2 1.5"/><path d="M8 16h11" stroke="#fff" stroke-width="2"/></svg>
        <svg width="30" height="24" viewBox="0 0 30 24"><circle cx="15" cy="7" r="5" fill="#b5d2f2"/><path d="M7 22c0-9 16-9 16 0z" fill="#b5d2f2"/></svg>
        <svg width="28" height="28" viewBox="0 0 28 28"><path d="M9 5l5 2 5-2 7 6-4 3-2-1v12H8V13l-2 1-4-3z" fill="#1f78e0"/></svg>
        <svg width="30" height="28" viewBox="0 0 30 28"><circle cx="15" cy="14" r="7" fill="none" stroke="#1f78e0" stroke-width="5"/><circle cx="15" cy="14" r="10" fill="none" stroke="#1f78e0" stroke-width="3.5" stroke-dasharray="4.5 3.35"/></svg>
      </div>

      <svg class="arrow" viewBox="1770 730 110 60"><polygon points="1873,739 1797,766 1796,762 1783,778 1801,779 1799,774" fill="#f02818"/></svg>
    </div>`;
  }
}
